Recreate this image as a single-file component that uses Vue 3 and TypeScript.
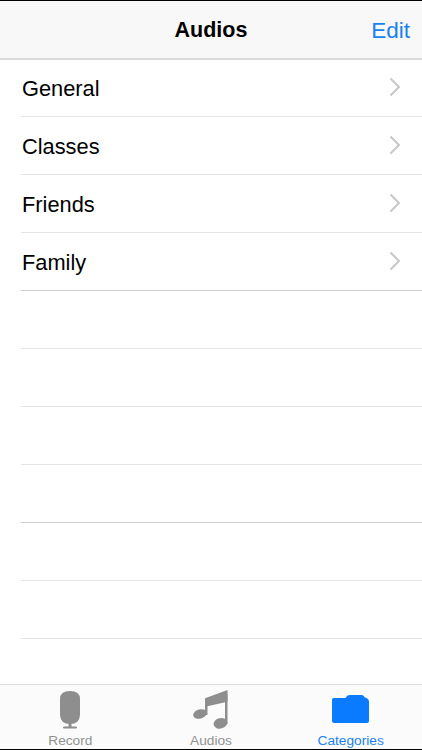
<script setup lang="ts">
const categories: string[] = ['General', 'Classes', 'Friends', 'Family']
const emptyRows: number[] = [1, 2, 3, 4, 5, 6]
</script>

<template>
  <div class="screen">
    <header class="nav">
      <span class="nav-side"></span>
      <h1 class="title">Audios</h1>
      <span class="nav-side edit">Edit</span>
    </header>
    <main class="list">
      <div v-for="c in categories" :key="c" class="row">
        <span class="label">{{ c }}</span>
        <svg class="chevron" width="12" height="20" viewBox="0 0 12 20">
          <path d="M1.5 1.5 L10 10 L1.5 18.5" fill="none" stroke="#c7c7cc" stroke-width="2" />
        </svg>
      </div>
      <div v-for="n in emptyRows" :key="n" class="row"></div>
    </main>
    <nav class="tabs">
      <div class="tab">
        <svg class="icon" width="42" height="40" viewBox="0 0 42 40">
          <path d="M11 10 Q11 2 21 2 Q31 2 31 10 L31 26 Q30.500 35 21 35 Q11.500 35 11 26 Z" fill="#8e8e8e" />
          <rect x="19.500" y="34" width="3" height="4" fill="#8e8e8e" />
          <rect x="14" y="37.500" width="14" height="2" rx="1" fill="#8e8e8e" />
        </svg>
        <span class="tab-label">Record</span>
      </div>
      <div class="tab">
        <svg class="icon" width="42" height="40" viewBox="0 0 42 40">
          <path d="M15 9.300 L37.500 1 L37.500 12.700 L15 17.700 Z" fill="#8e8e8e" />
          <path d="M15 10 L17.500 10 L17.500 26 L15 26 Z M35 5 L37.500 5 L37.500 35 L35 35 Z" fill="#8e8e8e" />
          <ellipse cx="10" cy="25" rx="7" ry="4.600" transform="rotate(-15 10 25)" fill="#8e8e8e" />
          <ellipse cx="30.500" cy="34.300" rx="7" ry="5.200" transform="rotate(-15 30.500 34.300)" fill="#8e8e8e" />
        </svg>
        <span class="tab-label">Audios</span>
      </div>
      <div class="tab active">
        <svg class="icon" width="42" height="40" viewBox="0 0 42 40">
          <path d="M2 11 Q2 9 4 9 L15.500 9 Q17 6 19.500 6 L31.500 6 Q33.500 6 34.500 8 L38 10 Q39 11 39 13 L39 32 Q39 34 37 34 L4 34 Q2 34 2 32 Z" fill="#0a7aff" />
        </svg>
        <span class="tab-label">Categories</span>
      </div>
    </nav>
  </div>
</template>

<style scoped>
.screen {
  width: 422px;
  height: 750px;
  background: #ffffff;
  display: flex;
  flex-direction: column;
  overflow: hidden;
  box-sizing: border-box;
  border-top: 1px solid #000;
  border-bottom: 1px solid #000;
  font-family: "Liberation Sans", Arial, sans-serif;
}
.nav {
  height: 59px;
  box-sizing: border-box;
  flex: none;
  display: flex;
  align-items: center;
  justify-content: space-between;
  padding: 2px 12px 0 12px;
  background: #f8f8f8;
  border-bottom: 2px solid #d9d9d9;
}
.nav-side {
  width: 60px;
}
.title {
  margin: 0;
  font-size: 21.500px;
  font-weight: 700;
  color: #000;
}
.edit {
  font-size: 22.500px;
  color: #1a82f0;
  text-align: right;
}
.list {
  flex: 1;
  min-height: 0;
  padding-left: 21px;
}
.row {
  height: 58px;
  box-sizing: border-box;
  display: flex;
  align-items: center;
  justify-content: space-between;
  padding-right: 21px;
  border-bottom: 1px solid #e4e4e4;
}
.row:first-child {
  height: 57px;
}
.row:nth-child(4) {
  border-bottom-color: #cfcfcf;
}
.row:nth-child(8) {
  border-bottom-color: #cfcfcf;
}
.label {
  font-size: 21.800px;
  color: #000;
  margin: 2px 0 0 1px;
}
.chevron {
  display: block;
  margin-bottom: 2px;
}
.row:first-child .chevron {
  margin-bottom: 3px;
}
.tabs {
  height: 65px;
  flex: none;
  box-sizing: border-box;
  display: grid;
  grid-template-columns: repeat(3, 1fr);
  background: #fbfbfb;
  border-top: 1px solid #dcdcdc;
}
.tab {
  display: flex;
  flex-direction: column;
  align-items: center;
  padding-top: 4px;
  color: #929292;
}
.icon {
  display: block;
  height: 40px;
}
.tab-label {
  font-size: 13.700px;
  line-height: 15px;
  margin-top: 4px;
}
.active {
  color: #1a82f0;
  padding-right: 2px;
}
</style>
